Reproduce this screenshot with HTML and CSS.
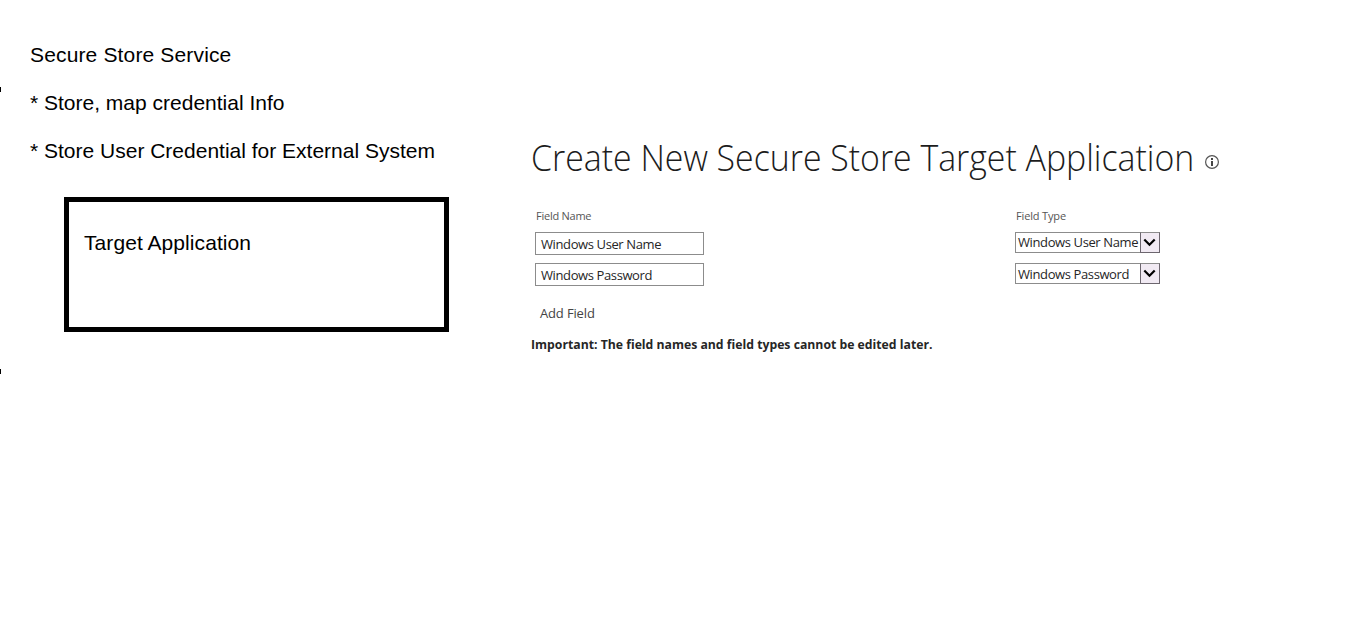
FILE: index.html
```html
<!DOCTYPE html>
<html lang="en">
<head>
<meta charset="utf-8">
<title>Secure Store Service</title>
<link rel="stylesheet" href="styles.css">
</head>
<body>
<main class="page">
  <span class="tick tick-upper"></span>
  <span class="tick tick-lower"></span>
  <section class="notes">
    <p class="note note-service">Secure Store Service</p>
    <p class="note note-map">* Store, map credential Info</p>
    <p class="note note-user">* Store User Credential for External System</p>
    <div class="target-box"><p class="target-label">Target Application</p></div>
  </section>
  <section class="form">
    <header class="form-header">
      <h1 class="title">Create New Secure Store Target Application</h1>
      <svg class="info" width="16" height="16" viewBox="0 0 16 16">
        <circle cx="8" cy="8" r="6.4" fill="none" stroke="#555" stroke-width="1.2"/>
        <path d="M7 4h2v2H7zM7 7h2v5H7z" fill="#444"/>
      </svg>
    </header>
    <div class="fields">
      <div class="column column-name">
        <span class="label label-name">Field Name</span>
        <div class="input"><span class="value">Windows User Name</span></div>
        <div class="input"><span class="value">Windows Password</span></div>
      </div>
      <div class="column column-type">
        <span class="label label-type">Field Type</span>
        <div class="select">
          <span class="value value-user">Windows User Name</span>
          <span class="arrow"><svg width="14" height="10" viewBox="0 0 14 10"><path d="M1.3 1.5l5.2 5.2 5.2-5.2" fill="none" stroke="#000" stroke-width="2.2"/></svg></span>
        </div>
        <div class="select">
          <span class="value">Windows Password</span>
          <span class="arrow"><svg width="14" height="10" viewBox="0 0 14 10"><path d="M1.3 1.5l5.2 5.2 5.2-5.2" fill="none" stroke="#000" stroke-width="2.2"/></svg></span>
        </div>
      </div>
    </div>
    <span class="add-field">Add Field</span>
    <p class="important">Important: The field names and field types cannot be edited later.</p>
  </section>
</main>
</body>
</html>
```
FILE: styles.css
```css
* { box-sizing: border-box; }
body { margin: 0; background: #fff; }
p, h1 { margin: 0; }
.page {
  position: relative;
  display: flex;
  width: 1360px;
  height: 623px;
  overflow: hidden;
}
.tick { position: absolute; left: 0; width: 1px; height: 5px; background: #000; }
.tick-upper { top: 87px; }
.tick-lower { top: 369px; }
.notes {
  width: 531px;
  padding: 31px 0 0 30px;
  font-family: "Liberation Sans", Arial, sans-serif;
  font-size: 21px;
  color: #000;
}
.note { line-height: 48px; white-space: nowrap; }
.note-service { letter-spacing: 0.15px; }
.target-box {
  width: 385px;
  height: 135px;
  margin: 22px 0 0 34px;
  padding: 17px 15px;
  border: 5px solid #000;
}
.target-label { line-height: 48px; letter-spacing: 0.07px; }
.form {
  display: flex;
  flex-direction: column;
  align-items: flex-start;
  padding-top: 134px;
  font-family: "Open Sans", "Segoe UI", sans-serif;
  font-size: 13px;
  color: #262626;
  white-space: nowrap;
}
.form-header { display: flex; align-items: center; height: 48px; }
.title {
  width: 673px;
  font-size: 36px;
  font-weight: 300;
  line-height: 48px;
  color: #1c1c1c;
  transform: scaleX(0.94);
  transform-origin: left center;
}
.info { margin-top: 8px; }
.fields { display: flex; padding: 26px 0 0 4px; }
.column { display: flex; flex-direction: column; }
.column-name { width: 480px; gap: 8px; }
.column-type { width: 145px; gap: 10px; }
.label { height: 16px; padding-left: 1px; font-size: 11px; line-height: 16px; color: #555; }
.label-name { letter-spacing: -0.25px; }
.label-type { margin-bottom: -2px; letter-spacing: -0.15px; }
.input {
  display: flex;
  align-items: center;
  width: 169px;
  height: 23px;
  padding-left: 5px;
  border: 1px solid #8c8c8c;
}
.select {
  display: flex;
  align-items: center;
  justify-content: space-between;
  width: 145px;
  height: 21px;
  padding-left: 2px;
  border: 1px solid #8c8c8c;
}
.value { line-height: 18px; letter-spacing: -0.39px; }
.value-user { padding-bottom: 2px; }
.arrow {
  display: flex;
  align-items: center;
  justify-content: center;
  flex: none;
  width: 20px;
  height: 21px;
  margin-right: -1px;
  background: #f1eaf3;
  border: 1px solid #6c666e;
  border-top-color: #8c8c8c;
}
.add-field { margin: 18px 0 0 9px; line-height: 18px; letter-spacing: -0.15px; color: #444; }
.important {
  margin-top: 13px;
  line-height: 18px;
  font-weight: 700;
  transform: scaleX(0.941);
  transform-origin: left center;
}
```
